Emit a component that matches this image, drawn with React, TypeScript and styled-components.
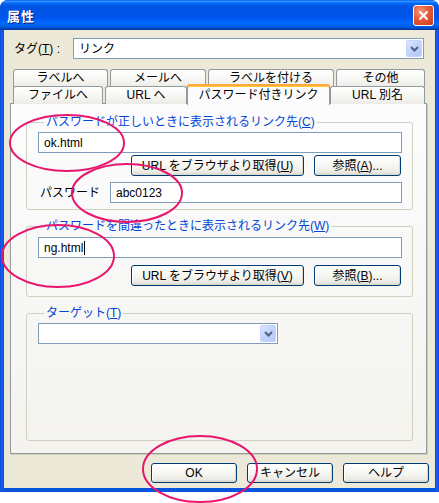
import React from "react";
import styled, { createGlobalStyle } from "styled-components";

const GlobalStyle = createGlobalStyle`
  html, body {
    margin: 0;
    padding: 0;
    background: #ffffff;
  }
  body {
    font-family: "Liberation Sans", "Noto Sans CJK JP", sans-serif;
    font-size: 12px;
    font-weight: 400;
    color: #000000;
  }
`;

const Page = styled.div`
  position: relative;
  width: 439px;
  height: 503px;
`;

const Window = styled.div`
  width: 439px;
  height: 492px;
  box-sizing: border-box;
  display: flex;
  flex-direction: column;
  padding: 0 4px 4px 4px;
  background: linear-gradient(90deg, #0831d9 0, #166aee 1px, #0855dd 3px, #0855dd calc(100% - 3px), #166aee calc(100% - 1px), #0831d9 100%);
  border-radius: 8px 8px 0 0;
  overflow: hidden;
`;

const TitleBar = styled.div`
  height: 30px;
  flex: none;
  margin: 0 -4px;
  padding: 0 5px 0 7px;
  display: flex;
  align-items: center;
  justify-content: space-between;
  background: linear-gradient(
    180deg,
    #0058ee 0%,
    #3593ff 4%,
    #288eff 6%,
    #127dff 8%,
    #036ffc 10%,
    #0262ee 14%,
    #0057e5 20%,
    #0054e3 24%,
    #0055eb 56%,
    #005bf5 66%,
    #026afe 76%,
    #0062ef 86%,
    #0052d6 92%,
    #0040ab 97%,
    #003092 100%
  );
`;

const Title = styled.span`
  color: #ffffff;
  font-family: "Noto Sans CJK JP", sans-serif;
  font-weight: bold;
  font-size: 13px;
  letter-spacing: 1px;
  text-shadow: 1px 1px 0 #0a1883;
`;

const CloseButton = styled.div`
  width: 21px;
  height: 21px;
  box-sizing: border-box;
  border: 1px solid #ffffff;
  border-radius: 3px;
  background: radial-gradient(circle at 35% 30%, #f29a7a 0%, #e45a36 45%, #c8391a 100%);
  display: flex;
  align-items: center;
  justify-content: center;
`;

const Body = styled.div`
  flex: 1;
  background: #ece9d8;
  display: flex;
  flex-direction: column;
  padding: 8px 7px 5px 6px;
`;

const TagRow = styled.div`
  display: flex;
  align-items: center;
  height: 21px;
  padding-left: 4px;
`;

const TagLabel = styled.span`
  width: 59px;
  line-height: 14px;
`;

const Field = styled.div<{ $w?: number; $grow?: boolean }>`
  box-sizing: border-box;
  flex: none;
  height: 21px;
  ${(p) => (p.$w ? `width: ${p.$w}px;` : "")}
  ${(p) => (p.$grow ? "flex: 1 1 auto;" : "")}
  border: 1px solid #7f9db9;
  background: #ffffff;
  display: flex;
  align-items: center;
  padding: 0 1px 0 5px;
  line-height: 14px;
`;

const FieldText = styled.span`
  flex: 1;
  display: flex;
  align-items: center;
`;

const Caret = styled.span`
  width: 1px;
  height: 14px;
  background: #000000;
  margin-left: 1px;
`;

const DropButton = styled.div`
  width: 16px;
  height: 17px;
  border-radius: 2px;
  background: linear-gradient(135deg, #dbe6fe 0%, #c1d3fb 50%, #b4c8f6 100%);
  border: 1px solid #c3d3fd;
  box-sizing: border-box;
  display: flex;
  align-items: center;
  justify-content: center;
`;

const Tabs = styled.div`
  margin-top: 10px;
  padding-left: 3px;
  display: flex;
  flex-direction: column;
  position: relative;
  z-index: 1;
`;

const TabRow = styled.div`
  display: flex;
  height: 17px;
`;

const Tab = styled.div<{ $w: number; $gap?: number; $active?: boolean }>`
  box-sizing: border-box;
  width: ${(p) => p.$w}px;
  margin-right: ${(p) => p.$gap ?? 0}px;
  height: ${(p) => (p.$active ? 21 : 18)}px;
  margin-top: ${(p) => (p.$active ? -2 : 0)}px;
  border: 1px solid #919b9c;
  border-bottom: none;
  border-top: ${(p) => (p.$active ? "2px solid #ffa93c" : "1px solid #919b9c")};
  border-radius: 3px 3px 0 0;
  background: ${(p) =>
    p.$active ? "#fcfcfe" : "linear-gradient(180deg, #ffffff 0%, #f7f7f4 50%, #ecebe6 100%)"};
  display: flex;
  align-items: center;
  justify-content: center;
  line-height: 14px;
  padding-bottom: ${(p) => (p.$active ? 2 : 1)}px;
  position: relative;
  z-index: ${(p) => (p.$active ? 2 : 1)};
  box-shadow: ${(p) => (p.$active ? "inset 0 1px 0 #ffc73c" : "none")};
`;

const Panel = styled.div`
  flex: 1;
  margin-right: 1px;
  border: 1px solid #919b9c;
  background: linear-gradient(180deg, #fcfcfe 0%, #f4f3ee 100%);
  display: flex;
  flex-direction: column;
  padding: 11px 13px 12px 15px;
  gap: 9px;
  box-shadow: 1px 1px 0 #d0cec0;
`;

const Group = styled.fieldset<{ $grow?: boolean; $pt?: number; $pb?: number }>`
  margin: 0;
  min-width: 0;
  border: 1px solid #d0d0bf;
  border-radius: 3px;
  padding: ${(p) => p.$pt ?? 3}px 10px ${(p) => p.$pb ?? 6}px 11px;
  display: flex;
  flex-direction: column;
  ${(p) => (p.$grow ? "flex: 1;" : "")}
`;

const Legend = styled.legend`
  margin-left: 6px;
  padding: 0 2px;
  color: #0046d5;
  line-height: 14px;
`;

const ButtonRow = styled.div<{ $top: number }>`
  display: flex;
  justify-content: flex-end;
  gap: 10px;
  margin-top: ${(p) => p.$top}px;
  padding-right: 1px;
`;

const XpButton = styled.div<{ $w: number; $h?: number }>`
  box-sizing: border-box;
  width: ${(p) => p.$w}px;
  height: ${(p) => p.$h ?? 21}px;
  border: 1px solid #003c74;
  border-radius: 3px;
  background: linear-gradient(180deg, #ffffff 0%, #f5f5f1 55%, #ebeae3 85%, #d8d3c8 100%);
  box-shadow: inset -1px -1px 0 #dcd8cc, inset 1px 1px 0 #ffffff;
  display: flex;
  align-items: center;
  justify-content: center;
  line-height: 14px;
`;

const PasswordRow = styled.div`
  display: flex;
  align-items: center;
  margin-top: 6px;
`;

const RowLabel = styled.span`
  width: 72px;
  padding-left: 2px;
  box-sizing: border-box;
  line-height: 14px;
`;

const DialogButtons = styled.div`
  display: flex;
  justify-content: flex-end;
  gap: 10px;
  margin-top: 9px;
  margin-right: -1px;
`;

const Annotations = styled.svg`
  position: absolute;
  left: 0;
  top: 0;
  pointer-events: none;
`;

const Chevron = () => (
  <svg width="9" height="6" viewBox="0 0 9 6">
    <polyline points="1,1 4.5,4.5 8,1" fill="none" stroke="#4d6185" strokeWidth="2" />
  </svg>
);

const Combo = ({ w, text }: { w?: number; text?: string }) => (
  <Field $w={w}>
    <FieldText>{text}</FieldText>
    <DropButton>
      <Chevron />
    </DropButton>
  </Field>
);

const App = () => {
  return (
    <Page>
      <GlobalStyle />
      <Window>
        <TitleBar>
          <Title>属性</Title>
          <CloseButton>
            <svg width="11" height="11" viewBox="0 0 11 11">
              <path d="M1.5 1.5 L9.5 9.5 M9.5 1.5 L1.5 9.5" stroke="#ffffff" strokeWidth="2" />
            </svg>
          </CloseButton>
        </TitleBar>
        <Body>
          <TagRow>
            <TagLabel>
              タグ(<u>T</u>) :
            </TagLabel>
            <Combo w={351} text="リンク" />
          </TagRow>

          <Tabs>
            <TabRow>
              <Tab $w={95} $gap={2}>ラベルへ</Tab>
              <Tab $w={96} $gap={2}>メールへ</Tab>
              <Tab $w={126} $gap={2}>ラベルを付ける</Tab>
              <Tab $w={89}>その他</Tab>
            </TabRow>
            <TabRow>
              <Tab $w={90} $gap={2}>ファイルへ</Tab>
              <Tab $w={82}>URL へ</Tab>
              <Tab $w={143} $active>パスワード付きリンク</Tab>
              <Tab $w={95}>URL 別名</Tab>
            </TabRow>
          </Tabs>

          <Panel>
            <Group>
              <Legend>
                パスワードが正しいときに表示されるリンク先(<u>C</u>)
              </Legend>
              <Field>
                <FieldText>ok.html</FieldText>
              </Field>
              <ButtonRow $top={2}>
                <XpButton $w={173}>
                  URL をブラウザより取得(<u>U</u>)
                </XpButton>
                <XpButton $w={87}>
                  参照(<u>A</u>)...
                </XpButton>
              </ButtonRow>
              <PasswordRow>
                <RowLabel>パスワード</RowLabel>
                <Field $grow>
                  <FieldText>abc0123</FieldText>
                </Field>
              </PasswordRow>
            </Group>

            <Group $pt={4} $pb={10}>
              <Legend>
                パスワードを間違ったときに表示されるリンク先(<u>W</u>)
              </Legend>
              <Field>
                <FieldText>
                  ng.html
                  <Caret />
                </FieldText>
              </Field>
              <ButtonRow $top={7}>
                <XpButton $w={173}>
                  URL をブラウザより取得(<u>V</u>)
                </XpButton>
                <XpButton $w={87}>
                  参照(<u>B</u>)...
                </XpButton>
              </ButtonRow>
            </Group>

            <Group $grow>
              <Legend>
                ターゲット(<u>T</u>)
              </Legend>
              <Combo w={240} />
            </Group>
          </Panel>

          <DialogButtons>
            <XpButton $w={86} $h={20}>OK</XpButton>
            <XpButton $w={86} $h={20}>キャンセル</XpButton>
            <XpButton $w={86} $h={20}>ヘルプ</XpButton>
          </DialogButtons>
        </Body>
      </Window>

      <Annotations width="439" height="503" viewBox="0 0 439 503">
        <g fill="none" stroke="#e8166c" strokeWidth="2">
          <ellipse cx="67" cy="143" rx="57" ry="28" />
          <ellipse cx="127" cy="193" rx="55" ry="29" />
          <ellipse cx="58" cy="256" rx="56" ry="31" />
          <ellipse cx="200" cy="469" rx="57" ry="33" />
        </g>
      </Annotations>
    </Page>
  );
};

export default App;
